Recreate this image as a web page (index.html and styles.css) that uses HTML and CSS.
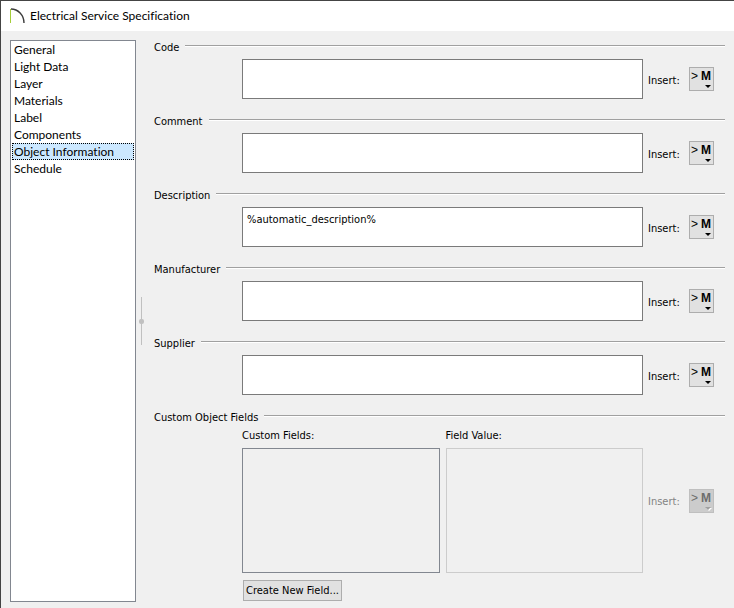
FILE: index.html
```html
<!DOCTYPE html>
<html lang="en">
<head>
    <meta charset="UTF-8">
    <meta name="viewport" content="width=device-width, initial-scale=1.0">
    <title>Electrical Service Specification</title>
    <link rel="stylesheet" href="styles.css">
</head>
<body>
    <header class="title-bar">
        <svg class="logo" width="16" height="16" viewBox="0 0 16 16">
            <path d="M1 1 C8 1 14 7 14 15" fill="none" stroke="#3c3c3c" stroke-width="1.4"/>
            <path d="M0.5 1 V15" stroke="#a4cd39" stroke-width="1"/>
        </svg>
        <h1>Electrical Service Specification</h1>
    </header>

    <div class="content">
        <nav class="panel-list">
            <a href="#">General</a>
            <a href="#">Light Data</a>
            <a href="#">Layer</a>
            <a href="#">Materials</a>
            <a href="#">Label</a>
            <a href="#">Components</a>
            <a href="#" class="selected">Object Information</a>
            <a href="#">Schedule</a>
        </nav>

        <div class="splitter"><span class="grip"></span></div>

        <form class="panel">
            <section>
                <h2><label for="code">Code</label></h2>
                <div class="row">
                    <textarea id="code"></textarea>
                    <label class="insert" for="codeInsert">Insert:</label>
                    <button type="button" class="macro" id="codeInsert">&gt;<b>M</b></button>
                </div>
            </section>

            <section>
                <h2><label for="comment">Comment</label></h2>
                <div class="row">
                    <textarea id="comment"></textarea>
                    <label class="insert" for="commentInsert">Insert:</label>
                    <button type="button" class="macro" id="commentInsert">&gt;<b>M</b></button>
                </div>
            </section>

            <section>
                <h2><label for="description">Description</label></h2>
                <div class="row">
                    <textarea id="description" spellcheck="false">%automatic_description%</textarea>
                    <label class="insert" for="descriptionInsert">Insert:</label>
                    <button type="button" class="macro" id="descriptionInsert">&gt;<b>M</b></button>
                </div>
            </section>

            <section>
                <h2><label for="manufacturer">Manufacturer</label></h2>
                <div class="row">
                    <textarea id="manufacturer"></textarea>
                    <label class="insert" for="manufacturerInsert">Insert:</label>
                    <button type="button" class="macro" id="manufacturerInsert">&gt;<b>M</b></button>
                </div>
            </section>

            <section>
                <h2><label for="supplier">Supplier</label></h2>
                <div class="row">
                    <textarea id="supplier"></textarea>
                    <label class="insert" for="supplierInsert">Insert:</label>
                    <button type="button" class="macro" id="supplierInsert">&gt;<b>M</b></button>
                </div>
            </section>

            <section class="custom">
                <h2>Custom Object Fields</h2>
                <div class="row">
                    <div class="field">
                        <label for="customFields">Custom Fields:</label>
                        <select id="customFields" size="2"></select>
                    </div>
                    <div class="field">
                        <label for="fieldValue">Field Value:</label>
                        <textarea id="fieldValue" disabled></textarea>
                    </div>
                    <label class="insert off" for="valueInsert">Insert:</label>
                    <button type="button" class="macro" id="valueInsert" disabled>&gt;<b>M</b></button>
                </div>
                <button type="button" class="create">Create New Field...</button>
            </section>
        </form>
    </div>
</body>
</html>
```
FILE: styles.css
```css
* {
    box-sizing: border-box;
}

body {
    display: flex;
    flex-direction: column;
    min-height: 100vh;
    margin: 0;
    border-top: 1px solid #444;
    border-left: 1px solid #444;
    background-color: #f0f0f0;
    color: #000;
    font-family: "DejaVu Sans Condensed", "DejaVu Sans", sans-serif;
    font-size: 11px;
    line-height: 16px;
    font-variant-ligatures: none;
}

.title-bar {
    display: flex;
    align-items: center;
    gap: 4px;
    height: 30px;
    padding-left: 9px;
    background-color: #fff;
}

h1 {
    margin: 0;
    font-family: Lato, "Open Sans", sans-serif;
    font-size: 12px;
    font-weight: normal;
}

.content {
    display: flex;
    flex: 1;
    padding: 9px 9px 6px;
}

.panel-list {
    width: 126px;
    border: 1px solid #828790;
    background-color: #fff;
    font-family: Lato, "Open Sans", sans-serif;
    font-size: 12px;
    line-height: 17px;
}

.panel-list a {
    display: block;
    height: 17px;
    margin: 0 1px;
    padding-left: 2px;
    color: #000;
    text-decoration: none;
    white-space: nowrap;
}

.panel-list .selected {
    border: 1px dotted #000;
    padding-left: 1px;
    background-color: #cce8ff;
    line-height: 15px;
}

.splitter {
    display: flex;
    align-items: center;
    width: 18px;
    padding-left: 5px;
}

.grip {
    position: relative;
    width: 1px;
    height: 48px;
    background-color: #c0c0c0;
}

.grip::after {
    content: "";
    position: absolute;
    top: 22px;
    left: -2px;
    width: 5px;
    height: 5px;
    border-radius: 2px;
    background-color: #c0c0c0;
}

.panel {
    flex: 1;
    min-width: 0;
}

section {
    height: 74px;
}

h2 {
    display: flex;
    gap: 6px;
    margin: 0 0 3px;
    font-size: 11px;
    font-weight: normal;
}

h2::after {
    content: "";
    flex: 1;
    height: 0;
    margin-top: 5px;
    border-top: 1px solid #a0a0a0;
    border-bottom: 1px solid #fff;
}

.row {
    display: flex;
    align-items: center;
    padding: 0 11px 0 88px;
}

textarea,
select {
    display: block;
    flex: 1;
    min-width: 0;
    height: 40px;
    margin: 0;
    padding: 4px;
    border: 1px solid #7a7a7a;
    border-radius: 0;
    background-color: #fff;
    color: #000;
    font: inherit;
    resize: none;
    overflow: hidden;
}

.insert {
    width: 41px;
    margin-left: 5px;
    padding-top: 3px;
}

.off {
    color: #838383;
}

.macro {
    position: relative;
    display: flex;
    gap: 3px;
    width: 25px;
    height: 24px;
    padding: 0 0 0 1px;
    border: 1px solid #adadad;
    background-color: #e1e1e1;
    color: #000;
    font-family: "Liberation Sans", sans-serif;
    font-size: 12px;
    line-height: 16px;
}

.macro::after {
    content: "";
    position: absolute;
    right: 2px;
    bottom: 2px;
    border: 3px solid transparent;
    border-top-color: #000;
    border-bottom: 0;
}

.macro:disabled {
    border-color: #bfbfbf;
    background-color: #ccc;
    color: #6d6d6d;
}

.macro:disabled::after {
    border-top-color: #a0a0a0;
    filter: drop-shadow(1px 1px 0 #fff);
}

.custom {
    height: auto;
}

.custom h2 {
    margin-bottom: 2px;
}

.field {
    display: flex;
    flex: 1;
    flex-direction: column;
    gap: 4px;
    min-width: 0;
}

.field + .field {
    margin-left: 6px;
}

.field select,
.field textarea {
    flex: none;
    height: 125px;
    width: 100%;
    background-color: #f0f0f0;
}

.field select {
    border-color: #828790;
}

.field textarea {
    border-color: #ccc;
}

.create {
    height: 21px;
    margin: 7px 0 0 89px;
    padding: 0 2px;
    border: 1px solid #adadad;
    background-color: #e1e1e1;
    color: #000;
    font: inherit;
}
```
